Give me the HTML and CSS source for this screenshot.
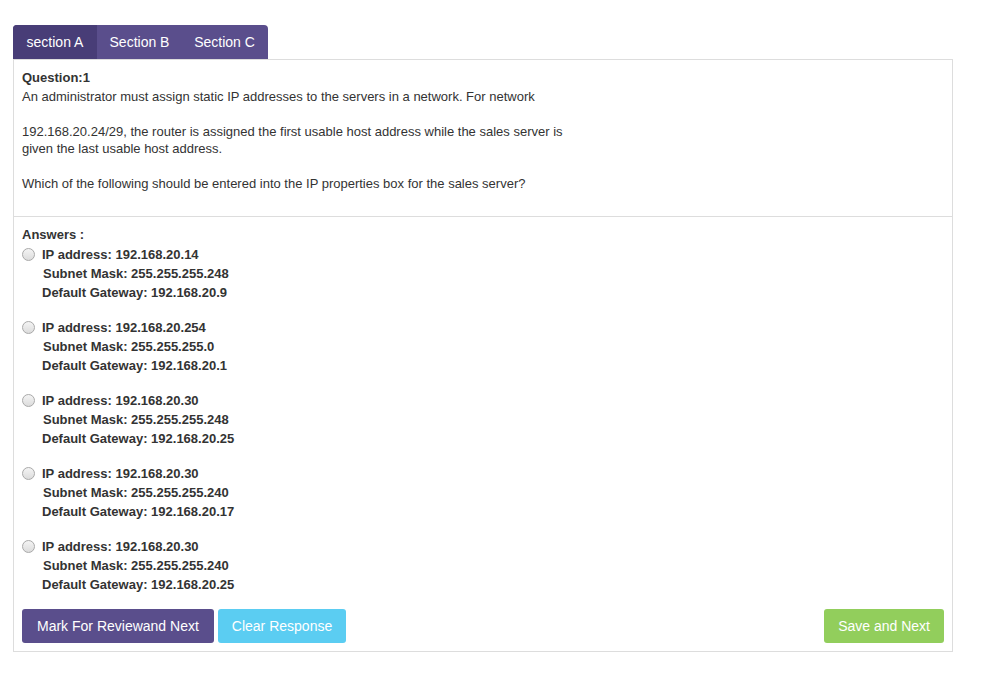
FILE: index.html
```html
<!DOCTYPE html>
<html>
<head>
<meta charset="utf-8">
<title>Exam</title>
<link rel="stylesheet" href="styles.css">
</head>
<body>
<div class="exam">
  <div class="tabs">
    <div class="tab active">section A</div>
    <div class="tab">Section B</div>
    <div class="tab">Section C</div>
  </div>
  <div class="panel">
    <div class="question">
      <div class="q-title">Question:1</div>
      <p>An administrator must assign static IP addresses to the servers in a network. For network</p>
      <p>192.168.20.24/29, the router is assigned the first usable host address while the sales server is<br>given the last usable host address.</p>
      <p>Which of the following should be entered into the IP properties box for the sales server?</p>
    </div>
    <div class="answers">
      <div class="a-title">Answers :</div>
      <label class="option"><span class="radio"></span><span class="lines">IP address: 192.168.20.14<br><span class="sub">Subnet Mask: 255.255.255.248</span><br>Default Gateway: 192.168.20.9</span></label>
      <label class="option"><span class="radio"></span><span class="lines">IP address: 192.168.20.254<br><span class="sub">Subnet Mask: 255.255.255.0</span><br>Default Gateway: 192.168.20.1</span></label>
      <label class="option"><span class="radio"></span><span class="lines">IP address: 192.168.20.30<br><span class="sub">Subnet Mask: 255.255.255.248</span><br>Default Gateway: 192.168.20.25</span></label>
      <label class="option"><span class="radio"></span><span class="lines">IP address: 192.168.20.30<br><span class="sub">Subnet Mask: 255.255.255.240</span><br>Default Gateway: 192.168.20.17</span></label>
      <label class="option"><span class="radio"></span><span class="lines">IP address: 192.168.20.30<br><span class="sub">Subnet Mask: 255.255.255.240</span><br>Default Gateway: 192.168.20.25</span></label>
      <div class="actions">
        <button class="btn btn-review">Mark For Reviewand Next</button>
        <button class="btn btn-clear">Clear Response</button>
        <button class="btn btn-save">Save and Next</button>
      </div>
    </div>
  </div>
</div>
</body>
</html>
```
FILE: styles.css
```css
html, body {
  margin: 0;
  padding: 0;
  background: #fff;
}

body {
  font-family: "Liberation Sans", Arial, sans-serif;
  font-size: 13px;
  color: #333;
}

.exam {
  width: 940px;
  margin: 25px 0 0 13px;
}

.tabs {
  display: flex;
  width: 255px;
  height: 34px;
  background: #5a4e8c;
  border-radius: 4px 4px 0 0;
  overflow: hidden;
}

.tab {
  display: flex;
  align-items: center;
  justify-content: center;
  color: #fff;
  font-size: 14px;
  width: 85px;
}

.tab:first-child {
  width: 84px;
}

.tab.active {
  background: #483d77;
}

.panel {
  border: 1px solid #ddd;
}

.question {
  padding: 9px 8px 24px;
  border-bottom: 1px solid #ddd;
}

.q-title {
  font-weight: bold;
  line-height: 18px;
}

.question p {
  margin: 0 0 18px;
  line-height: 17px;
}

.question p:first-of-type {
  margin-top: 1px;
}

.question p:last-child {
  margin-bottom: 0;
}

.answers {
  padding: 9px 8px 8px;
}

.a-title {
  font-weight: bold;
  line-height: 18px;
}

.option {
  display: flex;
  align-items: flex-start;
  font-weight: bold;
  line-height: 19px;
  margin: 1px 0 16px;
}

.option + .option {
  margin-top: 0;
}

.option:last-of-type {
  margin-bottom: 15px;
}

.sub {
  padding-left: 1px;
}

.radio {
  flex: none;
  width: 11px;
  height: 11px;
  margin: 3px 7px 0 0;
  border-radius: 50%;
  border: 1px solid #a9a9a9;
  background: linear-gradient(#f4f4f4, #dcdcdc);
}

.actions {
  display: flex;
  gap: 4px;
}

.btn {
  font-family: "Liberation Sans", Arial, sans-serif;
  font-size: 14px;
  color: #fff;
  border: none;
  border-radius: 3px;
  height: 34px;
  padding: 0 14px;
  cursor: pointer;
}

.btn-review {
  background: #5a4e8c;
  padding: 0 15px;
}

.btn-clear {
  background: #5bcdf2;
}

.btn-save {
  margin-left: auto;
  background: #92ce5c;
}
```
